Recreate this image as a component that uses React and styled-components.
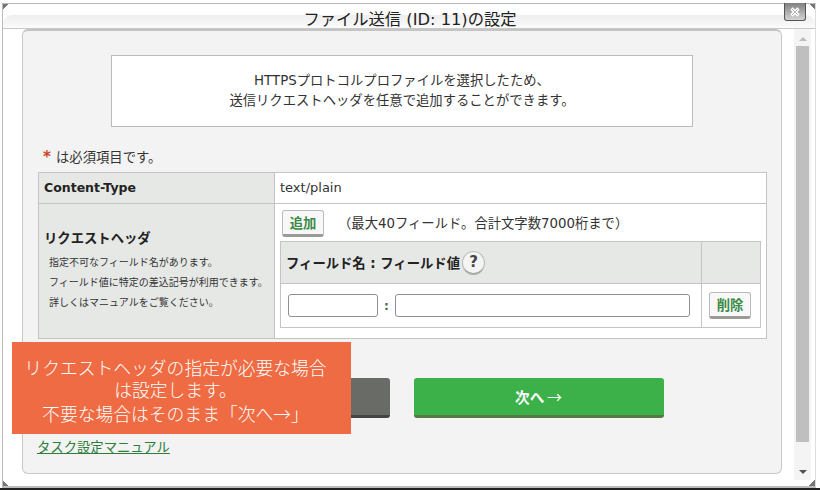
import React from 'react';
import styled, { createGlobalStyle } from 'styled-components';

const FONT = `"DejaVu Sans", "Noto Sans CJK JP", sans-serif`;
const CJK_FONT = `"Noto Sans CJK JP", sans-serif`;

const GlobalStyle = createGlobalStyle`
  html, body {
    margin: 0;
    padding: 0;
    background: #fff;
  }
  body {
    font-family: ${FONT};
    font-size: 13.33px;
    color: #333;
  }
`;

export default function App() {
  return (
    <>
      <GlobalStyle />
      <Page>
        <Dialog>
          <Corner $place="top: 0; left: 0;" $angle="135deg" />
          <Corner $place="top: 0; right: 0;" $angle="225deg" />
          <Corner $place="bottom: 0; left: 0;" $angle="45deg" />
          <Corner $place="bottom: 0; right: 0;" $angle="315deg" />
          <TitleBar>
            <Title>ファイル送信 (ID: 11)の設定</Title>
            <CloseButton aria-label="閉じる">
              <svg width="12" height="12" viewBox="0 0 12 12">
                <path d="M2.5 2.5l7 7M9.5 2.5l-7 7" stroke="#fff" strokeWidth="3.2" />
                <path d="M3 3l6 6M9 3l-6 6" stroke="#9a9a9a" strokeWidth="0.7" />
              </svg>
            </CloseButton>
          </TitleBar>
          <Body>
            <Card>
              <Notice>
                HTTPSプロトコルプロファイルを選択したため、<br />
                送信リクエストヘッダを任意で追加することができます。
              </Notice>
              <Required><Star>*</Star>は必須項目です。</Required>
              <FormTable>
                <Row>
                  <HeadCell>
                    <LatinLabel>Content-Type</LatinLabel>
                  </HeadCell>
                  <ValueCell>text/plain</ValueCell>
                </Row>
                <Row>
                  <HeadCell>
                    <Label>リクエストヘッダ</Label>
                    <Hints>
                      <li>指定不可なフィールド名があります。</li>
                      <li>フィールド値に特定の差込記号が利用できます。</li>
                      <li>詳しくはマニュアルをご覧ください。</li>
                    </Hints>
                  </HeadCell>
                  <HeaderFields>
                    <AddLine>
                      <SmallButton>追加</SmallButton>
                      <Limit>（最大40フィールド。合計文字数7000桁まで）</Limit>
                    </AddLine>
                    <FieldTable>
                      <FieldHead>
                        <FieldHeadName>
                          フィールド名 : フィールド値
                          <HelpIcon>?</HelpIcon>
                        </FieldHeadName>
                        <FieldHeadSpacer />
                      </FieldHead>
                      <FieldRow>
                        <FieldInputs>
                          <TextInput $width="90px" />
                          <Colon>:</Colon>
                          <TextInput $width="295px" />
                        </FieldInputs>
                        <FieldAction>
                          <SmallButton>削除</SmallButton>
                        </FieldAction>
                      </FieldRow>
                    </FieldTable>
                  </HeaderFields>
                </Row>
              </FormTable>
              <Actions>
                <ActionButton $bg="#696c66" $edge="#444" aria-label="戻る" />
                <ActionButton $bg="#3cb14a" $edge="#567a46">次へ<Arrow>→</Arrow></ActionButton>
              </Actions>
              <ManualLink href="#">タスク設定マニュアル</ManualLink>
            </Card>
            <Scrollbar>
              <ArrowUp />
              <Thumb />
              <ArrowDown />
            </Scrollbar>
          </Body>
        </Dialog>
        <Callout>
          リクエストヘッダの指定が必要な場合<br />
          は設定します。<br />
          不要な場合はそのまま「次へ<CalloutArrow>→</CalloutArrow>」
        </Callout>
      </Page>
    </>
  );
}

const Page = styled.div`
  position: relative;
  box-sizing: border-box;
  width: 820px;
  height: 490px;
  padding: 3px 4px 0 2px;
  overflow: hidden;
  border-bottom: 2px solid #222;
`;

const Dialog = styled.div`
  position: relative;
  box-sizing: border-box;
  height: 485px;
  display: flex;
  flex-direction: column;
  background: #fff;
  border: 1px solid #bbb;
  border-bottom: 2px solid #bbb;
  border-right-color: #ddd;
`;

const Corner = styled.i`
  position: absolute;
  ${props => props.$place}
  width: 6px;
  height: 6px;
  background: linear-gradient(${props => props.$angle}, #777 50%, transparent 50%);
`;

const TitleBar = styled.div`
  position: relative;
  box-sizing: border-box;
  height: 25px;
  flex-shrink: 0;
  display: flex;
  align-items: flex-end;
  justify-content: center;
  border-bottom: 1px solid #c8c8c8;

  &::before {
    content: '';
    position: absolute;
    top: 11px;
    left: 0;
    right: 0;
    bottom: 0;
    background: linear-gradient(#eee, #fbfbfb);
    border-radius: 9px 9px 0 0;
  }
`;

const Title = styled.h1`
  position: relative;
  margin: 0 0 -2px 2px;
  font-size: 16.3px;
  line-height: 20px;
  font-weight: normal;
  color: #222;
`;

const CloseButton = styled.button`
  position: absolute;
  top: -1px;
  right: 9px;
  box-sizing: border-box;
  width: 22px;
  height: 18px;
  padding: 0;
  display: flex;
  align-items: center;
  justify-content: center;
  background: linear-gradient(#808080, #d4d4d4);
  border: 1px solid #555;
  border-top: 0;
  border-radius: 0 0 3px 3px;
`;

const Body = styled.div`
  flex: 1;
  min-height: 0;
  display: flex;
  padding-left: 19px;
`;

const Card = styled.div`
  box-sizing: border-box;
  width: 760px;
  height: 445px;
  padding: 24px 14px 0 15px;
  background: #f3f3f3;
  border: 1px solid #c8c8c8;
  border-top: 2px solid #c4c4c4;
  border-radius: 6px;
`;

const Notice = styled.div`
  box-sizing: border-box;
  width: 582px;
  height: 72px;
  margin-left: 73px;
  padding-top: 15px;
  background: #fff;
  border: 1px solid #bbb;
  text-align: center;
  line-height: 20px;
`;

const Required = styled.p`
  margin: 21px 0 5px 5px;
  line-height: 18px;
`;

const Star = styled.span`
  display: inline-block;
  width: 13px;
  color: #c8451e;
  font-weight: bold;
  font-size: 15px;
`;

const FormTable = styled.div`
  width: 729px;
  border: 1px solid #c4c4c4;
  box-sizing: border-box;
  background: #fff;
`;

const Row = styled.div`
  display: flex;
  & + & {
    border-top: 1px solid #c4c4c4;
  }
`;

const HeadCell = styled.div`
  box-sizing: border-box;
  width: 236px;
  flex-shrink: 0;
  padding: 0 5px;
  display: flex;
  flex-direction: column;
  justify-content: center;
  background: #e6e8e6;
  border-right: 1px solid #c4c4c4;
`;

const Label = styled.div`
  line-height: 30px;
  font-weight: bold;
  color: #222;
`;

const LatinLabel = styled(Label)`
  font-size: 12.5px;
`;

const Hints = styled.ul`
  margin: -1px 0 6px 5px;
  padding: 0;
  list-style: none;
  font-size: 10px;
  line-height: 20px;
`;

const ValueCell = styled.div`
  padding-left: 5px;
  line-height: 30px;
  font-size: 13px;
`;

const HeaderFields = styled.div`
  flex: 1;
  padding: 6px 5px 10px;
`;

const AddLine = styled.div`
  display: flex;
  align-items: flex-start;
  padding-left: 2px;
  height: 31px;
`;

const SmallButton = styled.button`
  box-sizing: border-box;
  width: 42px;
  height: 27px;
  padding: 0;
  font-family: ${FONT};
  font-size: 13.33px;
  font-weight: bold;
  color: #3a8a46;
  background: #f8f8f8;
  border: 1px solid #bbb;
  border-bottom: 3px solid #999b96;
  border-radius: 3px;
`;

const Limit = styled.span`
  margin-left: 14px;
  line-height: 28px;
`;

const FieldTable = styled.div`
  width: 481px;
  box-sizing: border-box;
  border: 1px solid #c4c4c4;
`;

const FieldHead = styled.div`
  display: flex;
  height: 41px;
  background: #e6e8e6;
  border-bottom: 1px solid #c4c4c4;
`;

const FieldHeadName = styled.div`
  width: 421px;
  box-sizing: border-box;
  padding-left: 5px;
  display: flex;
  align-items: center;
  font-weight: bold;
  color: #222;
  border-right: 1px solid #c4c4c4;
`;

const FieldHeadSpacer = styled.div`
  flex: 1;
`;

const HelpIcon = styled.span`
  box-sizing: border-box;
  width: 23px;
  height: 24px;
  margin-left: 2px;
  display: flex;
  align-items: center;
  justify-content: center;
  font-size: 15px;
  font-weight: bold;
  color: #444;
  background: #f4f4f4;
  border: 1px solid #bbb;
  border-bottom: 2px solid #aaa;
  border-radius: 50%;
`;

const FieldRow = styled.div`
  display: flex;
  height: 43px;
  background: #fff;
`;

const FieldInputs = styled.div`
  width: 421px;
  box-sizing: border-box;
  padding-left: 7px;
  display: flex;
  align-items: center;
  border-right: 1px solid #c4c4c4;
`;

const TextInput = styled.input`
  box-sizing: border-box;
  width: ${props => props.$width};
  height: 23px;
  padding: 0 4px;
  background: #fff;
  border: 1px solid #8f8f8f;
  border-radius: 3px;
`;

const Colon = styled.span`
  width: 17px;
  text-align: center;
  font-weight: bold;
  font-size: 12px;
  color: #3a6a56;
`;

const FieldAction = styled.div`
  flex: 1;
  display: flex;
  align-items: center;
  justify-content: center;
  padding-right: 2px;
`;

const Actions = styled.div`
  display: flex;
  justify-content: center;
  gap: 24px;
  margin-top: 39px;
  padding-right: 2px;
`;

const ActionButton = styled.button`
  box-sizing: border-box;
  width: 250px;
  height: 40px;
  padding: 0;
  font-family: ${CJK_FONT};
  font-size: 14.67px;
  font-weight: bold;
  color: #fff;
  background: ${props => props.$bg};
  border: 0;
  border-bottom: 3px solid ${props => props.$edge};
  border-radius: 3px;
`;

const Arrow = styled.span`
  margin-left: 3px;
  font-weight: normal;
`;

const ManualLink = styled.a`
  display: inline-block;
  margin: 21px 0 0 -1px;
  line-height: 18px;
  color: #2e7d3c;
`;

const Scrollbar = styled.div`
  width: 17px;
  height: 451px;
  margin-left: 12px;
  display: flex;
  flex-direction: column;
  align-items: center;
  background: #f4f4f4;
`;

const ArrowUp = styled.div`
  margin: 8px 0 5px;
  border: 4px solid transparent;
  border-top: 0;
  border-bottom: 4px solid #bbb;
`;

const Thumb = styled.div`
  width: 13px;
  height: 396px;
  background: #bfbfbf;
`;

const ArrowDown = styled.div`
  margin-top: 28px;
  border: 4px solid transparent;
  border-bottom: 0;
  border-top: 4px solid #505050;
`;

const Callout = styled.div`
  position: absolute;
  left: 12px;
  top: 342px;
  box-sizing: border-box;
  width: 339px;
  height: 92px;
  padding: 16px 12px 0 0;
  background: #ee6b43;
  color: #fff;
  text-align: center;
  font-family: "Liberation Sans", "Noto Sans CJK JP", sans-serif;
  font-size: 17.8px;
  font-weight: 300;
  line-height: 22px;
`;

const CalloutArrow = styled.span`
  font-family: ${CJK_FONT};
`;
